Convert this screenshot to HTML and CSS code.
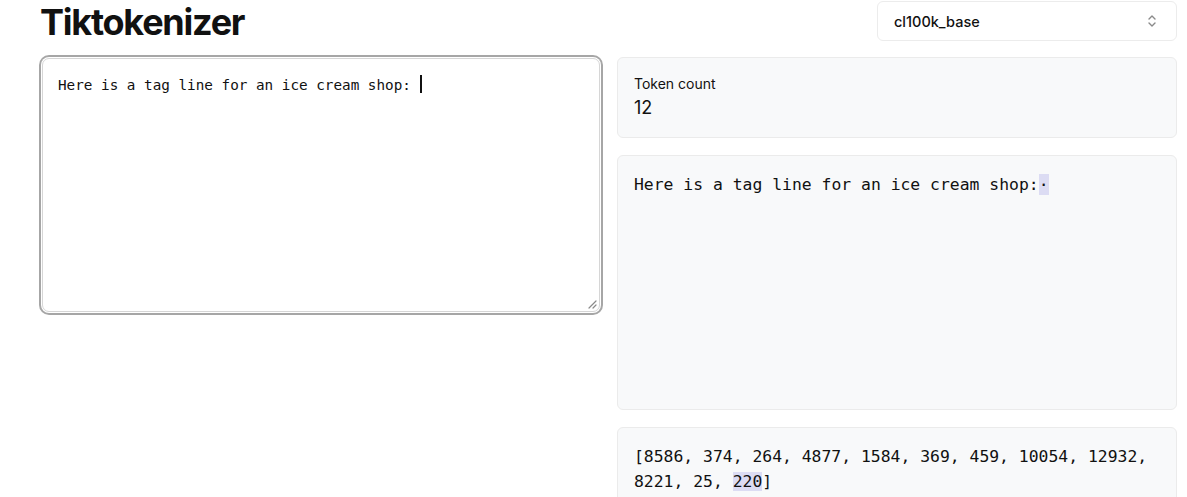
FILE: index.html
```html
<!DOCTYPE html>
<html lang="en">
<head>
<meta charset="utf-8">
<title>Tiktokenizer</title>
<link rel="stylesheet" href="styles.css">
</head>
<body>
<div class="page">
  <header class="header">
    <h1 class="title">Tiktokenizer</h1>
    <div class="select">
      <span class="select-label">cl100k_base</span>
      <svg class="chevrons" width="12" height="16" viewBox="0 0 12 16" aria-hidden="true">
        <path d="M3 6 L6 3 L9 6" fill="none" stroke="#8a8a8a" stroke-width="1.4" stroke-linecap="round" stroke-linejoin="round"/>
        <path d="M3 10 L6 13 L9 10" fill="none" stroke="#8a8a8a" stroke-width="1.4" stroke-linecap="round" stroke-linejoin="round"/>
      </svg>
    </div>
  </header>
  <main class="grid">
    <section class="left">
      <div class="editor"><span class="editor-text">Here is a tag line for an ice cream shop: </span><span class="caret"></span><svg class="resize" width="9" height="9" viewBox="0 0 9 9" aria-hidden="true"><path d="M8 1 L1 8 M8 5 L5 8" stroke="#8a8a8a" stroke-width="1.2" stroke-linecap="round"/></svg></div>
    </section>
    <section class="right">
      <div class="card count-card">
        <div class="count-label">Token count</div>
        <div class="count-value">12</div>
      </div>
      <div class="card tokens-card"><span class="tok">Here</span><span class="tok"> is</span><span class="tok"> a</span><span class="tok"> tag</span><span class="tok"> line</span><span class="tok"> for</span><span class="tok"> an</span><span class="tok"> ice</span><span class="tok"> cream</span><span class="tok"> shop</span><span class="tok">:</span><span class="tok hl">·</span></div>
      <div class="card ids-card">[8586, 374, 264, 4877, 1584, 369, 459, 10054, 12932, 8221, 25, <span class="hl">220</span>]</div>
    </section>
  </main>
</div>
</body>
</html>
```
FILE: styles.css
```css
* { box-sizing: border-box; }
html, body { margin: 0; padding: 0; background: #fff; }
body {
  font-family: Inter, "Noto Sans", "Liberation Sans", sans-serif;
  color: #111;
  overflow: hidden;
}
.page {
  padding: 0 10px 0 39px;
}
.header {
  display: flex;
  justify-content: space-between;
  align-items: flex-start;
  height: 55px;
}
.title {
  margin: 1px 0 0 1px;
  font-size: 36px;
  font-weight: 700;
  letter-spacing: -1.25px;
  line-height: 42px;
}
.select {
  margin-top: 1px;
  width: 300px;
  height: 40px;
  border: 1px solid #ececec;
  border-radius: 6px;
  display: flex;
  align-items: center;
  justify-content: space-between;
  padding: 0 18px 0 16px;
  background: #fff;
}
.select-label {
  font-size: 14.5px;
  font-weight: 500;
  color: #111;
}
.grid {
  display: grid;
  grid-template-columns: 564px 560px;
  column-gap: 14px;
  align-items: start;
}
.editor {
  position: relative;
  margin: 3px 3px 0 3px;
  height: 254px;
  border: 1px solid #d6d6d6;
  border-radius: 7px;
  box-shadow: 0 0 0 1px #fff, 0 0 0 3px #a6a6a6;
  padding: 16px 15px;
  font-family: "DejaVu Sans Mono", "Liberation Mono", monospace;
  font-size: 14.3px;
  line-height: 20px;
  color: #111;
  white-space: pre;
  background: #fff;
}
.caret {
  display: inline-block;
  width: 2px;
  height: 18px;
  background: #111;
  vertical-align: -3px;
}
.resize {
  position: absolute;
  right: 2px;
  bottom: 2px;
}
.right {
  display: flex;
  flex-direction: column;
  gap: 17px;
  padding-top: 2px;
}
.card {
  background: #f8f9fa;
  border: 1px solid #ebebeb;
  border-radius: 6px;
  padding: 16px 16px;
}
.count-card {
  height: 81px;
  padding-top: 16px;
}
.count-label {
  font-size: 14px;
  line-height: 20px;
}
.count-value {
  font-size: 18px;
  line-height: 26px;
  margin-top: 1px;
}
.tokens-card {
  height: 255px;
  padding-top: 16px;
  font-family: "DejaVu Sans Mono", "Liberation Mono", monospace;
  font-size: 16.4px;
  line-height: 25px;
  white-space: pre-wrap;
}
.tok { padding: 1px 0; }
.hl { background: #dcdcf3; }
.ids-card {
  height: 90px;
  padding-top: 16px;
  font-family: "DejaVu Sans Mono", "Liberation Mono", monospace;
  font-size: 16.4px;
  line-height: 25px;
}
```
